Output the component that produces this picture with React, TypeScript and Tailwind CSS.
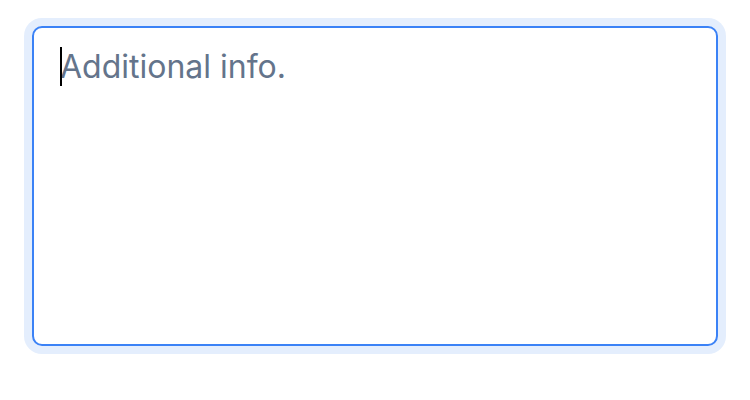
import React from 'react';

const App: React.FC = () => {
  return (
    <div className="min-h-screen bg-white px-8 pt-[26px]" style={{ fontFamily: 'Inter, "Noto Sans", sans-serif' }}>
      <div className="relative">
        <textarea
          autoFocus
          placeholder="Additional info."
          className="block h-[320px] w-full resize-none rounded-[10px] border-2 border-[#3b82f6] bg-white px-[26px] pt-[15px] pb-4 text-[32px] leading-normal text-gray-900 caret-black outline-none ring-8 ring-[#e4eefd] placeholder:text-[#64748b]"
        />
        {/* caret */}
        <span className="pointer-events-none absolute left-[28px] top-[21px] h-[39px] w-[2px] bg-black" />
      </div>
    </div>
  );
};

export default App;
